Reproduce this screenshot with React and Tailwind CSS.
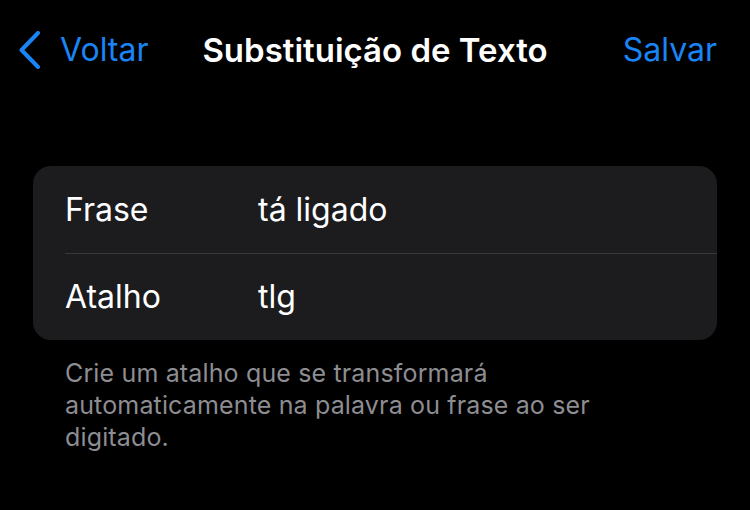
import React from 'react';

const rows = [
  { label: 'Frase', value: 'tá ligado' },
  { label: 'Atalho', value: 'tlg' },
];

export default function App() {
  return (
    <div className="w-[750px] h-[510px] bg-black text-white font-['Inter','Noto_Sans',sans-serif] overflow-hidden">
      {/* Navigation bar */}
      <div className="relative flex items-center justify-between h-[100px] pl-[18px] pr-[33px]">
        <button className="flex items-center gap-[19px] text-[#1a84f4] text-[32px] leading-none">
          <svg width="23" height="38" viewBox="0 0 23 38" fill="none">
            <path d="M20 2L3.5 19L20 36" stroke="#1a84f4" strokeWidth="4" strokeLinecap="round" strokeLinejoin="round" />
          </svg>
          <span>Voltar</span>
        </button>
        <h1 className="absolute left-1/2 -translate-x-1/2 text-[33px] font-semibold leading-none whitespace-nowrap">
          Substituição de Texto
        </h1>
        <button className="text-[#1a84f4] text-[32px] leading-none">Salvar</button>
      </div>

      {/* Card */}
      <div className="mx-[33px] mt-[66px] rounded-[18px] bg-[#1c1c1e] overflow-hidden">
        {rows.map((row, i) => (
          <div key={row.label} className="flex">
            <div className="w-[32px] shrink-0" />
            <div className={`flex flex-1 items-center h-[87px] ${i > 0 ? 'border-t border-[#38383a]' : ''}`}>
              <span className="w-[193px] text-[32px]">{row.label}</span>
              <span className="text-[32px]">{row.value}</span>
            </div>
          </div>
        ))}
      </div>

      {/* Footer note */}
      <p className="mt-[17px] pl-[65px] pr-[100px] text-[25px] tracking-[0.15px] leading-[32px] text-[#8d8d92]">
        Crie um atalho que se transformará automaticamente na palavra ou frase ao ser digitado.
      </p>
    </div>
  );
}
